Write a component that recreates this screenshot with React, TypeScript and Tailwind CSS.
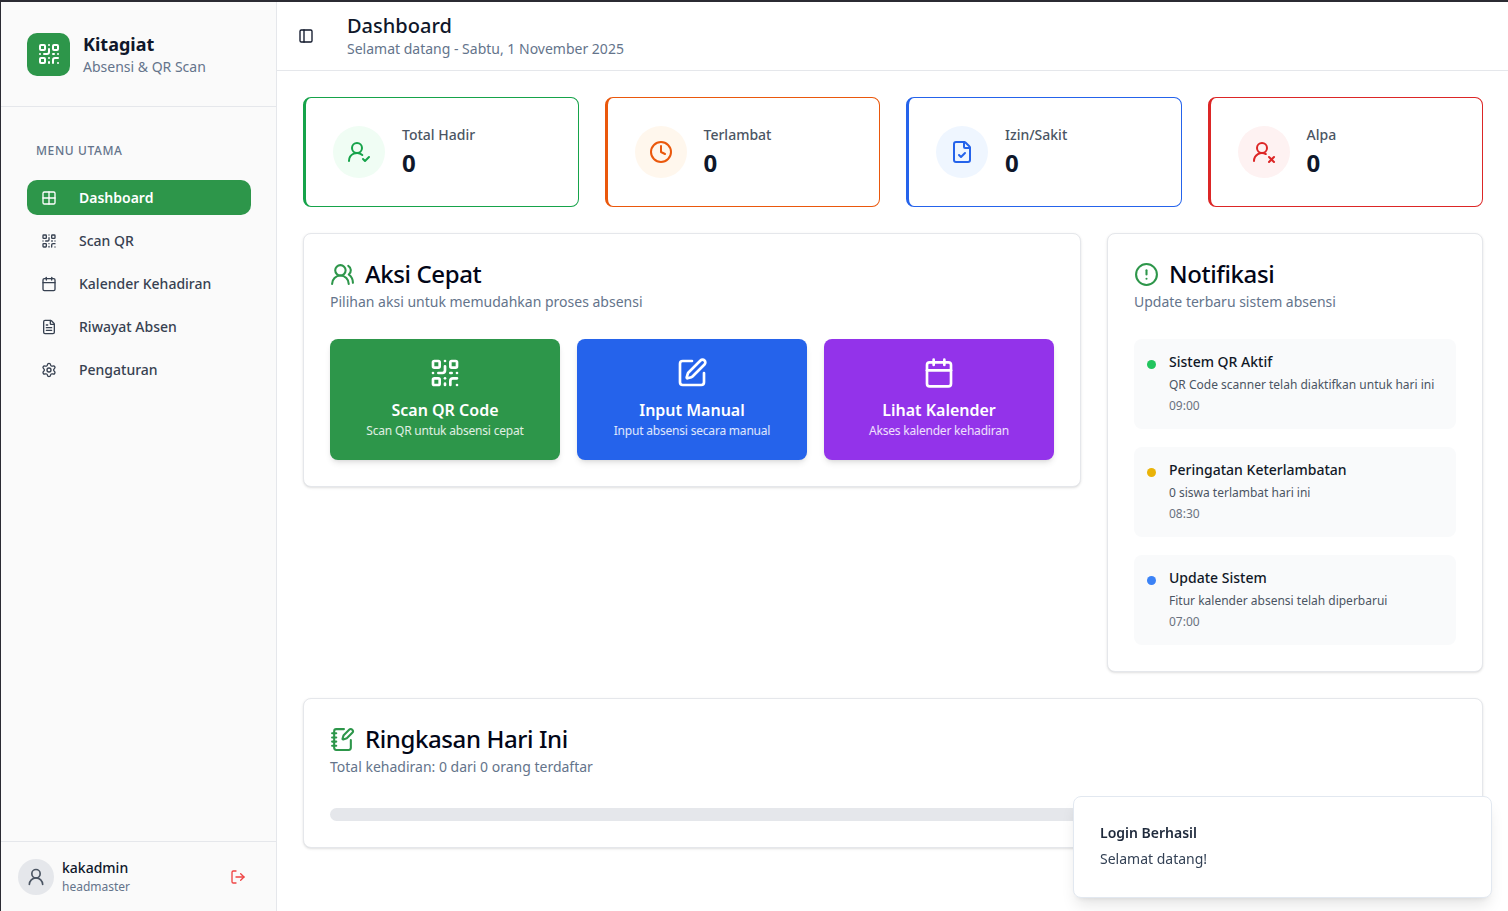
import {
  Calendar,
  CircleAlert,
  Clock,
  FileCheck,
  FileText,
  Grid2x2,
  LogOut,
  NotebookPen,
  PanelLeft,
  QrCode,
  Settings,
  SquarePen,
  UserRound,
  UserRoundCheck,
  UserRoundX,
  UsersRound,
} from "lucide-react";

const menu = [
  { label: "Dashboard", icon: Grid2x2, active: true },
  { label: "Scan QR", icon: QrCode },
  { label: "Kalender Kehadiran", icon: Calendar },
  { label: "Riwayat Absen", icon: FileText },
  { label: "Pengaturan", icon: Settings },
];

const stats = [
  { label: "Total Hadir", icon: UserRoundCheck, card: "border-[#16a34a]", circle: "bg-[#f0fdf4]", tint: "text-[#16a34a]" },
  { label: "Terlambat", icon: Clock, card: "border-[#ea580c]", circle: "bg-[#fff7ed]", tint: "text-[#ea580c]" },
  { label: "Izin/Sakit", icon: FileCheck, card: "border-[#2563eb]", circle: "bg-[#eff6ff]", tint: "text-[#2563eb]" },
  { label: "Alpa", icon: UserRoundX, card: "border-[#dc2626]", circle: "bg-[#fef2f2]", tint: "text-[#dc2626]" },
];

const actions = [
  { title: "Scan QR Code", sub: "Scan QR untuk absensi cepat", icon: QrCode, bg: "bg-[#2d964a]" },
  { title: "Input Manual", sub: "Input absensi secara manual", icon: SquarePen, bg: "bg-[#2563eb]" },
  { title: "Lihat Kalender", sub: "Akses kalender kehadiran", icon: Calendar, bg: "bg-[#9333ea]" },
];

const notifications = [
  { title: "Sistem QR Aktif", text: "QR Code scanner telah diaktifkan untuk hari ini", time: "09:00", dot: "bg-[#22c55e]" },
  { title: "Peringatan Keterlambatan", text: "0 siswa terlambat hari ini", time: "08:30", dot: "bg-[#eab308]" },
  { title: "Update Sistem", text: "Fitur kalender absensi telah diperbarui", time: "07:00", dot: "bg-[#3b82f6]" },
];

function Sidebar() {
  return (
    <aside className="flex w-[276px] shrink-0 flex-col border-r border-[#e5e7eb] bg-[#fafafa]">
      <div className="flex h-[105px] items-center gap-[13px] border-b border-[#e5e7eb] pl-[26px]">
        <div className="grid size-[43px] place-items-center rounded-[10px] bg-[#2d964a] text-white">
          <QrCode size={24} aria-hidden="true" />
        </div>
        <div>
          <p className="text-[18px] leading-[26px] font-bold text-[#0f172a]">Kitagiat</p>
          <p className="text-[14px] leading-[20px] text-[#64748b]">Absensi &amp; QR Scan</p>
        </div>
      </div>

      <nav className="flex-1 px-[26px] pt-[35px]">
        <p className="pl-[9px] text-[12px] leading-[18px] font-medium tracking-[0.6px] text-[#64748b]">MENU UTAMA</p>
        <ul className="mt-[20px] flex w-[224px] flex-col gap-2">
          {menu.map((item) => {
            const Icon = item.icon;
            return (
              <li
                key={item.label}
                className={
                  item.active
                    ? "flex h-[35px] items-center gap-[22px] rounded-[10px] bg-[#2d964a] pl-[14px] text-[14px] font-semibold text-white"
                    : "flex h-[35px] items-center gap-[22px] pl-[14px] text-[14px] font-medium text-[#374151]"
                }
              >
                <Icon size={16} aria-hidden="true" />
                {item.label}
              </li>
            );
          })}
        </ul>
      </nav>

      <div className="flex h-[70px] items-center border-t border-[#e5e7eb] pr-[30px] pl-[17px]">
        <div className="grid size-[36px] place-items-center rounded-full bg-[#e5e7eb] text-[#4b5563]">
          <UserRound size={20} aria-hidden="true" />
        </div>
        <div className="ml-[8px] flex-1">
          <p className="text-[14px] leading-[20px] font-medium text-[#0f172a]">kakadmin</p>
          <p className="text-[12px] leading-[18px] text-[#64748b]">headmaster</p>
        </div>
        <LogOut size={16} className="text-[#ef4444]" aria-hidden="true" />
      </div>
    </aside>
  );
}

function CardTitle({ icon: Icon, title, sub }: { icon: typeof QrCode; title: string; sub: string }) {
  return (
    <div>
      <div className="flex h-[28px] items-center gap-[10px]">
        <Icon size={25} className="text-[#2d964a]" aria-hidden="true" />
        <h2 className="text-[24px] leading-[28px] font-medium tracking-[-0.4px] text-[#020617]">{title}</h2>
      </div>
      <p className="mt-[4px] text-[14px] leading-[20px] text-[#64748b]">{sub}</p>
    </div>
  );
}

export default function App() {
  return (
    <div className="flex h-[911px] overflow-hidden border-t-2 border-l border-[#2b2b33] bg-white font-['Noto_Sans',sans-serif]">
      <Sidebar />

      <div className="flex min-w-0 flex-1 flex-col">
        <header className="flex h-[69px] shrink-0 items-center border-b border-[#e5e7eb] pl-[21px]">
          <PanelLeft size={16} className="text-[#0f172a]" aria-hidden="true" />
          <div className="ml-[33px]">
            <h1 className="text-[20px] leading-[26px] font-medium text-[#0f172a]">Dashboard</h1>
            <p className="text-[14px] leading-[20px] text-[#64748b]">Selamat datang - Sabtu, 1 November 2025</p>
          </div>
        </header>

        <main className="flex flex-col gap-[26px] pt-[26px] pr-[25px] pl-[26px]">
          <section className="grid grid-cols-4 gap-[26px]">
            {stats.map((stat) => {
              const Icon = stat.icon;
              return (
                <article
                  key={stat.label}
                  className={`flex h-[110px] items-center gap-[17px] rounded-lg border border-l-[3px] bg-white pl-[27px] ${stat.card}`}
                >
                  <div className={`grid size-[52px] place-items-center rounded-full ${stat.circle} ${stat.tint}`}>
                    <Icon size={24} aria-hidden="true" />
                  </div>
                  <div>
                    <p className="text-[14px] leading-[20px] font-medium text-[#4b5563]">{stat.label}</p>
                    <p className="mt-[2px] text-[24px] leading-[32px] font-bold text-[#0f172a]">0</p>
                  </div>
                </article>
              );
            })}
          </section>

          <section className="grid grid-cols-3 items-start gap-[26px]">
            <div className="col-span-2 rounded-lg border border-[#e5e7eb] bg-white p-[26px] shadow-sm">
              <CardTitle icon={UsersRound} title="Aksi Cepat" sub="Pilihan aksi untuk memudahkan proses absensi" />
              <div className="mt-[27px] grid grid-cols-3 gap-[17px]">
                {actions.map((action) => {
                  const Icon = action.icon;
                  return (
                    <div
                      key={action.title}
                      className={`flex h-[121px] flex-col items-center rounded-lg pt-[18px] text-white shadow-md ${action.bg}`}
                    >
                      <Icon size={32} aria-hidden="true" />
                      <p className="mt-[9px] text-[16px] leading-[24px] font-semibold">{action.title}</p>
                      <p className="text-[12px] leading-[18px] tracking-[-0.2px] text-white/85">{action.sub}</p>
                    </div>
                  );
                })}
              </div>
            </div>

            <div className="rounded-lg border border-[#e5e7eb] bg-white p-[26px] shadow-sm">
              <CardTitle icon={CircleAlert} title="Notifikasi" sub="Update terbaru sistem absensi" />
              <div className="mt-[27px] flex flex-col gap-[18px]">
                {notifications.map((note) => (
                  <div key={note.title} className="flex h-[90px] rounded-lg bg-[#f9fafb] pt-[13px] pl-[13px]">
                    <span className={`mt-[8px] size-[9px] shrink-0 rounded-full ${note.dot}`} />
                    <div className="ml-[13px]">
                      <p className="text-[14px] leading-[20px] font-medium text-[#111827]">{note.title}</p>
                      <p className="mt-[3px] text-[12px] leading-[20px] text-[#4b5563]">{note.text}</p>
                      <p className="mt-[1px] text-[12px] leading-[20px] text-[#6b7280]">{note.time}</p>
                    </div>
                  </div>
                ))}
              </div>
            </div>
          </section>

          <section className="rounded-lg border border-[#e5e7eb] bg-white p-[26px] shadow-sm">
            <CardTitle icon={NotebookPen} title="Ringkasan Hari Ini" sub="Total kehadiran: 0 dari 0 orang terdaftar" />
            <div className="mt-[31px] h-[13px] rounded-full bg-[#e5e7eb]" />
          </section>
        </main>
      </div>

      <div className="fixed top-[796px] left-[1073px] h-[102px] w-[419px] rounded-lg border border-[#e2e8f0] bg-white pt-[26px] pl-[26px] shadow-lg">
        <p className="text-[14px] leading-[20px] font-semibold text-[#1e293b]">Login Berhasil</p>
        <p className="mt-[6px] text-[14px] leading-[20px] text-[#334155]">Selamat datang!</p>
      </div>
    </div>
  );
}
